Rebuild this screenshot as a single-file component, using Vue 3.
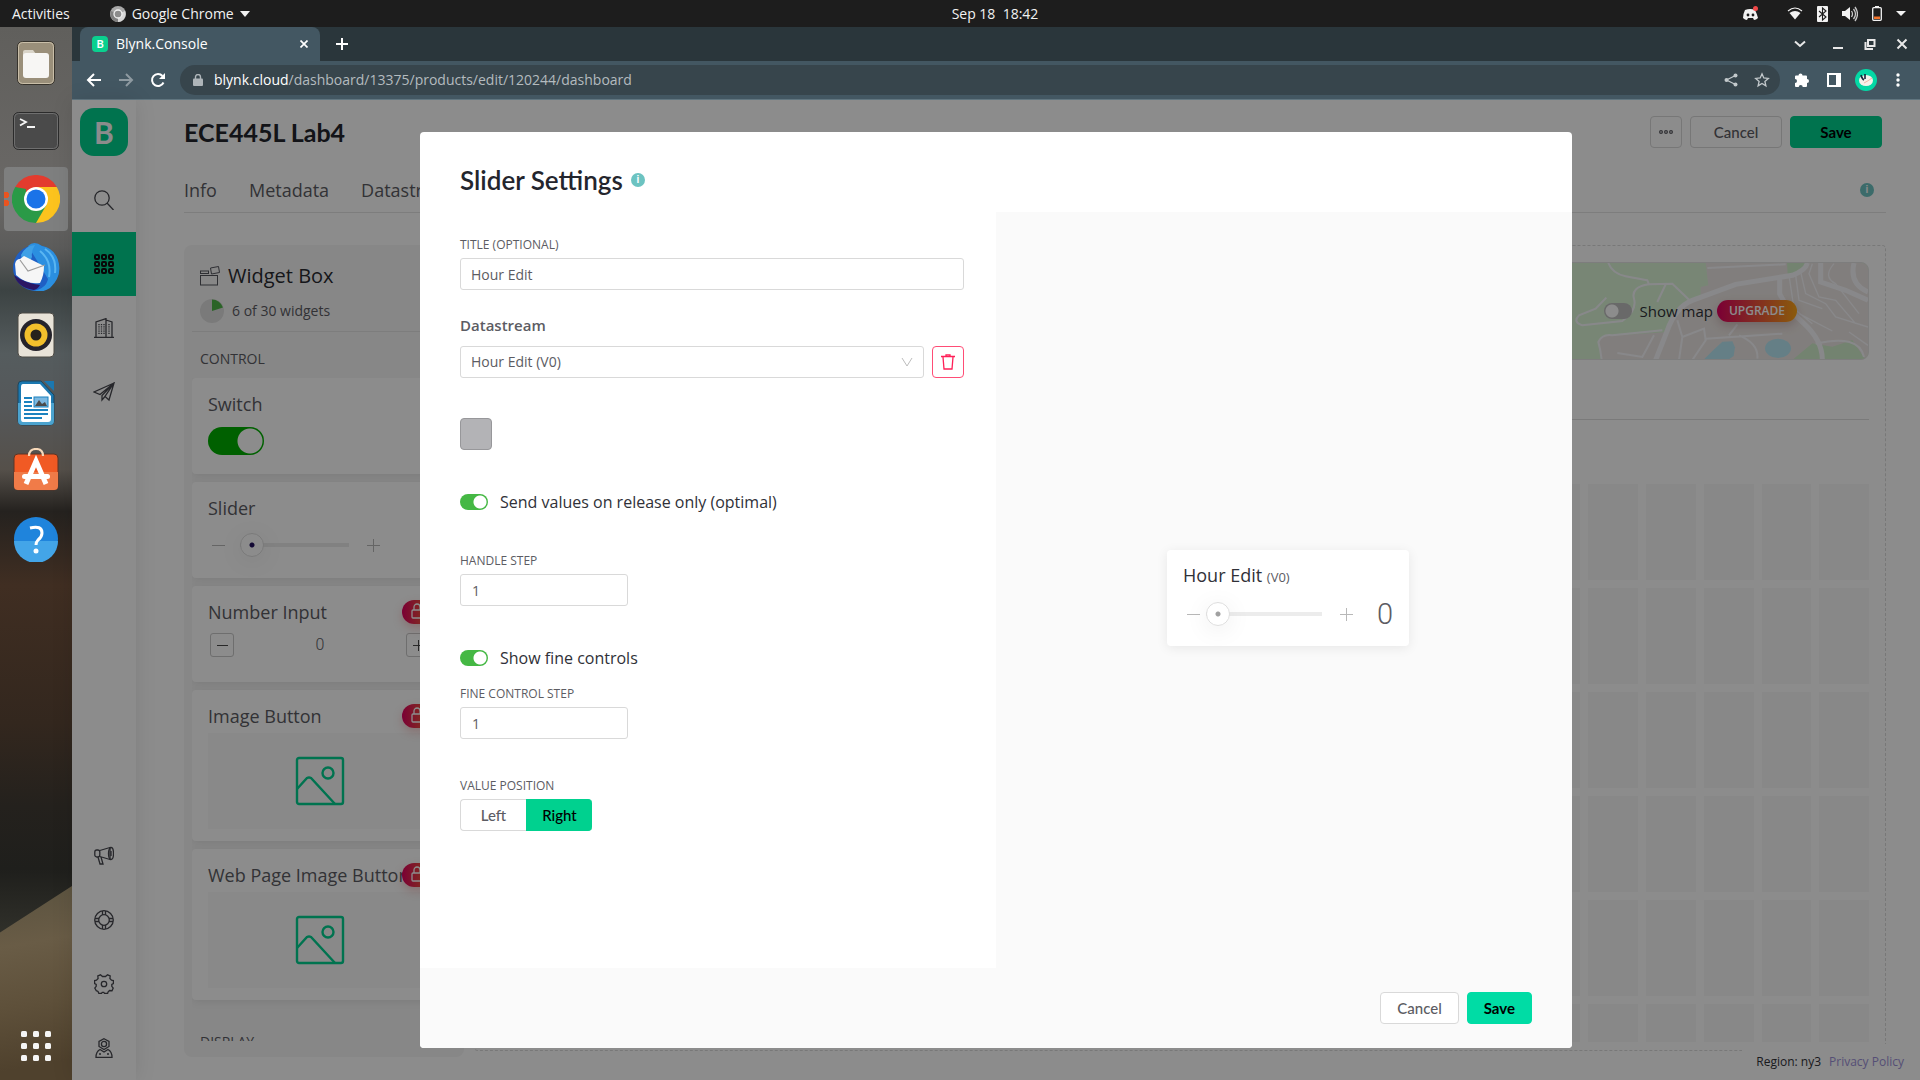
<script setup>
import { ref } from 'vue'

const title = ref('Hour Edit')
const stream = ref('Hour Edit (V0)')
const onRelease = ref(true)
const fineControls = ref(true)
const handleStep = ref('1')
const fineStep = ref('1')
const position = ref('Right')
const sliderValue = ref(0)
const demoSlider = ref(0)
const demoSwitch = ref(true)
const showMap = ref(false)
const columns = 24
const rows = 6
</script>

<template>
  <div class="desktop">
    <header class="topbar">
      <div class="topbar-left">
        <span>Activities</span>
        <span class="app-menu">
          <svg width="16" height="16" viewBox="0 0 16 16"><circle cx="8" cy="8" r="8" fill="#a9a9a9" /><path d="M8 8L15 5A8 8 0 0 1 8 16z" fill="#d8d8d8" /><path d="M8 8L1 5A8 8 0 0 0 8 16z" fill="#808080" /><circle cx="8" cy="8" r="4" fill="#8c8c8c" stroke="#f2f2f2" stroke-width="1.3" /></svg>
          Google Chrome
          <svg width="10" height="6" viewBox="0 0 10 6"><path d="M0 0h10L5 6z" fill="#f2f2f2" /></svg>
        </span>
      </div>
      <time class="clock">Sep 18&nbsp; 18:42</time>
      <div class="tray">
        <svg class="discord" width="17" height="15" viewBox="0 0 17 15"><path d="M3 4q5-2 10 0q2 4 3 8q-2 2-4 2l-1-2h-5l-1 2q-2 0-4-2q0-4 2-8z" fill="#f2f2f2" /><circle cx="6" cy="9" r="1.4" fill="#1d1d1d" /><circle cx="11" cy="9" r="1.4" fill="#1d1d1d" /><circle cx="13.5" cy="2.6" r="2.5" fill="#f04747" /></svg>
        <svg width="16" height="13" viewBox="0 0 16 13"><path d="M1 4q7-6 14 0" fill="none" stroke="#f2f2f2" stroke-width="1.2" /><path d="M2.500 6q5.500-4 11 0L8 12.500z" fill="#f2f2f2" /></svg>
        <svg width="11" height="16" viewBox="0 0 11 16"><rect width="11" height="16" rx="1" fill="#f2f2f2" /><path d="M2 5l7 6-3.500 3V2L9 5 2 11" fill="none" stroke="#1d1d1d" stroke-width="1.1" /></svg>
        <svg width="16" height="16" viewBox="0 0 16 16"><path d="M0 5h3l5-4v13l-5-4H0z" fill="#f2f2f2" /><path d="M9.500 5q2 3 0 6M11.500 3q4 5 0 10M13 1q5 7 0 14" fill="none" stroke="#c8c8c8" stroke-width="1.3" /></svg>
        <svg width="10" height="15" viewBox="0 0 10 15"><path d="M3 0h4v2H3z" fill="#f2f2f2" /><rect x=".7" y="1.700" width="8.600" height="12.600" rx="1" fill="none" stroke="#f2f2f2" stroke-width="1.300" /><path d="M2 10.500h6v2.500H2z" fill="#f37329" /></svg>
        <svg width="10" height="5" viewBox="0 0 10 5"><path d="M0 0h10L5 5z" fill="#f2f2f2" /></svg>
      </div>
    </header>

    <div class="workspace">
      <aside class="dock">
        <div class="dock-item">
          <svg width="46" height="46" viewBox="0 0 46 46"><rect x="4.500" y="1.500" width="37" height="43" rx="5" fill="#9a8f7a" stroke="#37332c" /><rect x="5.500" y="2.500" width="35" height="41" rx="4" fill="none" stroke="#c9bea8" /><path d="M10 12q0-2 2-2h8l3 4h-3L10 20z" fill="#d9d4c8" /><rect x="10" y="13" width="26" height="25" rx="3" fill="#f7f6f4" /></svg>
        </div>
        <div class="dock-item">
          <svg width="46" height="40" viewBox="0 0 46 40"><rect x=".5" y="1.500" width="45" height="37" rx="5" fill="#4a4a4a" stroke="#2b2b2b" /><rect x="1.500" y="2.500" width="43" height="35" rx="4" fill="none" stroke="#6f6f6f" /><path d="M7 8l6 3-6 3.500M14 16h8" fill="none" stroke="#f5f5f5" stroke-width="1.800" /></svg>
        </div>
        <div class="dock-item active">
          <svg width="48" height="48" viewBox="0 0 48 48"><path d="M24 24L3.200 12A24 24 0 0 1 44.800 12z" fill="#e33b2e" /><path d="M24 24L44.800 12A24 24 0 0 1 24 48z" fill="#fcc31e" /><path d="M24 24L24 48A24 24 0 0 1 3.200 12z" fill="#2a9a47" /><path d="M24 12h20.800L34 30z" fill="#fcc31e" /><path d="M13.600 30L3.200 12 14 14z" fill="#2a9a47" /><path d="M34.400 30L24 48l-4-10z" fill="#2a9a47" /><circle cx="24" cy="24" r="12" fill="#fff" /><circle cx="24" cy="24" r="9.500" fill="#1a73e8" /></svg>
        </div>
        <div class="dock-item">
          <svg width="48" height="48" viewBox="0 0 48 48"><circle cx="24" cy="25" r="23" fill="#1f5fc4" /><path d="M16 3q6-6 14 0q12 2 16 14q5 16-8 28q-10 6-18 3q14-2 16-12L24 16z" fill="#2b8fe0" /><path d="M33 6q12 8 10 24M28 8q12 10 9 26" fill="none" stroke="#5ab6f2" stroke-width="2" /><path d="M9 12q5-10 14-10-4 6-3 12-2 6-9 7z" fill="#3ea0e6" /><path d="M3 21q1-5 5-5l4-3 20 10q0 10-4 17Q15 42 4 32z" fill="#f6f6f6" /><path d="M8 17l8 11 17-6" fill="none" stroke="#9c9c9c" stroke-width="1.200" /><path d="M2 32q10 8 26 10-2 4-6 5Q6 45 2 32z" fill="#2b1664" /></svg>
        </div>
        <div class="dock-item">
          <svg width="38" height="46" viewBox="0 0 38 46"><rect x="1" y="1" width="36" height="44" rx="4" fill="#e8e3d8" stroke="#4d4a45" /><circle cx="19" cy="23" r="16" fill="#25232b" /><circle cx="19" cy="23" r="11.500" fill="#f2bf2c" /><circle cx="19" cy="23" r="5.500" fill="#26221c" /></svg>
        </div>
        <div class="dock-item">
          <svg width="38" height="46" viewBox="0 0 38 46"><path d="M5 1h19l13 14v26q0 4-4 4H5q-4 0-4-4V5q0-4 4-4z" fill="#1b78b0" stroke="#20455a" /><path d="M1 23h36v18q0 4-4 4H5q-4 0-4-4z" fill="#4ba3cf" /><path d="M27 1h10v10z" fill="#1b78b0" /><path d="M6 4h17l11 12v23q0 3-3 3H6q-2 0-2-3V7q0-3 2-3z" fill="#fff" /><path d="M7 18h8M7 22h8M7 26h8M7 30h24M7 34h24M7 38h18" stroke="#1b82bf" stroke-width="2" /><rect x="17" y="17" width="14" height="10" fill="#7cb8e0" stroke="#1b82bf" /><path d="M18 26l4-6 3 4 3-2 2 4z" fill="#4b4b4b" /></svg>
        </div>
        <div class="dock-item">
          <svg width="46" height="46" viewBox="0 0 46 46"><rect x="1" y="6" width="44" height="36" rx="4" fill="#f15a24" stroke="#5c3526" /><path d="M1 24h44v14q0 4-4 4H5q-4 0-4-4z" fill="#f07b48" /><path d="M16 8q0-7 7-7t7 7" fill="none" stroke="#f7d8b8" stroke-width="2.200" /><path d="M13 36l10-23 10 23" fill="none" stroke="#fff" stroke-width="5" /><rect x="9" y="26" width="28" height="5" rx="2.500" fill="#fff" /></svg>
        </div>
        <div class="dock-item">
          <svg width="46" height="46" viewBox="0 0 46 46"><circle cx="23" cy="23" r="22" fill="#1f84dc" /><path d="M1 25a22 22 0 0 0 44 0z" fill="#43a5e8" /><path d="M17 12q12-3 12 5 0 4-4 7-2 2-2 5" fill="none" stroke="#fff" stroke-width="3" /><circle cx="23" cy="35" r="2.500" fill="#fff" /></svg>
        </div>
        <button class="show-apps" aria-label="Show applications">
          <svg width="30" height="30" viewBox="0 0 30 30" fill="#f5f5f5"><g v-for="r in 3" :key="r"><rect v-for="c in 3" :key="c" :x="(c - 1) * 12" :y="(r - 1) * 12" width="6" height="6" rx="1.500" /></g></svg>
        </button>
      </aside>

      <div class="browser">
        <div class="tabstrip">
          <div class="tab">
            <span class="favicon">B</span>
            <span class="tab-title">Blynk.Console</span>
            <svg width="8" height="8" viewBox="0 0 8 8"><path d="M.5.5l7 7M7.500.5l-7 7" stroke="#fff" stroke-width="1.700" /></svg>
          </div>
          <svg class="new-tab" width="12" height="12" viewBox="0 0 12 12"><path d="M6 0v12M0 6h12" stroke="#fff" stroke-width="2" /></svg>
          <div class="window-controls">
            <svg class="tab-search" width="12" height="12" viewBox="0 0 12 12"><path d="M1 3.500l5 4.500 5-4.500" fill="none" stroke="#e8e8e8" stroke-width="2" /></svg>
            <svg width="12" height="12" viewBox="0 0 12 12"><path d="M1 10h10" stroke="#e8e8e8" stroke-width="2" /></svg>
            <svg width="12" height="12" viewBox="0 0 12 12"><path d="M4 2h6.500v6H4zM1.500 4v7H9" fill="none" stroke="#e8e8e8" stroke-width="2" /></svg>
            <svg width="12" height="12" viewBox="0 0 12 12"><path d="M1.500 1.500l9 9M10.500 1.500l-9 9" stroke="#e8e8e8" stroke-width="2" /></svg>
          </div>
        </div>

        <div class="toolbar">
          <div class="nav-buttons">
            <svg width="16" height="16" viewBox="0 0 16 16"><path d="M15 8H2M8 2L2 8l6 6" fill="none" stroke="#fff" stroke-width="2" /></svg>
            <svg width="16" height="16" viewBox="0 0 16 16"><path d="M1 8h13M8 2l6 6-6 6" fill="none" stroke="#8e9aa1" stroke-width="2" /></svg>
            <svg width="16" height="16" viewBox="0 0 16 16"><path d="M13.500 10.500A6 6 0 1 1 12.500 4" fill="none" stroke="#fff" stroke-width="2" /><path d="M15 1v6H9z" fill="#fff" /></svg>
          </div>
          <div class="omnibox">
            <svg width="10" height="12" viewBox="0 0 10 12"><rect y="4.500" width="10" height="7.500" rx="1" fill="#aeb5b9" /><path d="M2.500 5V3a2.500 2.500 0 0 1 5 0v2" fill="none" stroke="#aeb5b9" stroke-width="1.400" /></svg>
            <span class="url"><b>blynk.cloud</b>/dashboard/13375/products/edit/120244/dashboard</span>
            <svg width="14" height="14" viewBox="0 0 14 14"><path d="M11.500 2.500L2.500 7l9 4.500" fill="none" stroke="#c3c9cc" stroke-width="1.300" /><g fill="#c3c9cc"><circle cx="11.500" cy="2.500" r="2" /><circle cx="2.500" cy="7" r="2" /><circle cx="11.500" cy="11.500" r="2" /></g></svg>
            <svg width="16" height="16" viewBox="0 0 16 16"><path d="M8 1.800l1.800 4.200 4.500.4-3.400 3 1 4.400L8 11.500l-3.900 2.300 1-4.400-3.400-3 4.500-.4z" fill="none" stroke="#c3c9cc" stroke-width="1.300" /></svg>
          </div>
          <div class="extensions">
            <svg width="16" height="16" viewBox="0 0 16 16"><path d="M4.500 3.500a2 2 0 0 1 4 0H12q1 0 1 1V7a2 2 0 0 1 0 4v3q0 1-1 1H8.700a2 2 0 0 0-4 0H2q-1 0-1-1v-3a2 2 0 0 0 0-4V4.500q0-1 1-1z" fill="#fff" /></svg>
            <svg width="14" height="14" viewBox="0 0 14 14"><rect x="1" y="1" width="12" height="12" fill="none" stroke="#fff" stroke-width="2" /><path d="M9 1h4v12H9z" fill="#fff" /></svg>
            <svg width="22" height="22" viewBox="0 0 22 22"><circle cx="11" cy="11" r="11" fill="#04d8a5" /><ellipse cx="11" cy="11.500" rx="7" ry="5.500" fill="#f5f1ea" /><path d="M6 6q1 4 3 5M10 5v5" stroke="#16243a" stroke-width="1.600" /><path d="M9 14q4-2 8-5" stroke="#f0b8a8" fill="none" /></svg>
            <svg width="4" height="14" viewBox="0 0 4 14" fill="#fff"><circle cx="2" cy="2" r="1.700" /><circle cx="2" cy="7" r="1.700" /><circle cx="2" cy="12" r="1.700" /></svg>
          </div>
        </div>

        <div class="page">
          <nav class="sidebar">
            <a href="#" class="logo">B</a>
            <a href="#" class="side-link" aria-label="Search"><svg width="20" height="20" viewBox="0 0 20 20"><circle cx="8" cy="8" r="7.200" /><path d="M13 13l6.500 7" /></svg></a>
            <a href="#" class="side-link current" aria-label="Templates"><svg width="20" height="20" viewBox="0 0 20 20"><g v-for="r in 3" :key="r"><rect v-for="c in 3" :key="c" :x="(c - 1) * 7 + 1" :y="(r - 1) * 7 + 1" width="4" height="4" rx="1" /></g></svg></a>
            <a href="#" class="side-link" aria-label="Organization"><svg width="20" height="20" viewBox="0 0 20 20"><path d="M0 19.400h20M2 19V4l10-3.400V19M12 2l6 2v15" /><path d="M5 6v10M7.500 6v10M10 6v10M15 6v10" stroke-dasharray="1.200 1" /></svg></a>
            <a href="#" class="side-link" aria-label="Messages"><svg width="22" height="20" viewBox="0 0 22 20"><path d="M21 1L1 10l6 2.500L21 1l-5 17-4-3.500L21 1 9 13.500V18l3-3.500" /></svg></a>
            <span class="spacer"></span>
            <a href="#" class="side-link" aria-label="News"><svg width="20" height="20" viewBox="0 0 20 20"><rect x=".8" y="4" width="5" height="7" rx="2" /><path d="M5.800 4.500L16 1.500v12L5.800 10.500M4 11l2 7h3l-2-7" /><ellipse cx="17" cy="7.500" rx="2.500" ry="6" /><path d="M17 5v5" /></svg></a>
            <a href="#" class="side-link" aria-label="Help"><svg width="20" height="20" viewBox="0 0 20 20"><circle cx="10" cy="10" r="9.300" /><circle cx="10" cy="10" r="5.300" /><path d="M8.500 1v4M11.500 1v4M8.500 15v4M11.500 15v4M1 8.500h4M1 11.500h4M15 8.500h4M15 11.500h4" /></svg></a>
            <a href="#" class="side-link" aria-label="Settings"><svg width="20" height="20" viewBox="0 0 20 20"><path d="M6.500.8l2 1.700h3l2-1.700 2.700 1.200-.3 2.500 1.600 1.600 1.900.4v3l-1.600.8v2l1.400 1.700-1.200 2.700-2.500-.2-1.500 1.500-.4 1.500h-3l-.8-1.200h-1.600l-.8 1.200h-2.500L4 17.500l-1.700-.8-1.500-2.700 1.400-1.700v-2L.6 9.500v-3l1.900-.4 1.600-1.600L3.800 2z" /><circle cx="10" cy="10" r="2.700" /></svg></a>
            <a href="#" class="side-link" aria-label="Profile"><svg width="20" height="20" viewBox="0 0 20 20"><path d="M10 .7l5 2.800v5L10 11.500 5 8.500v-5zM6 11.500q-4 2-4 7.800h16q0-5.800-4-7.800l-4 2.500zM5 16h2M13 16h2" /><circle cx="10" cy="6" r="2.600" /></svg></a>
          </nav>

          <main class="content">
            <div class="page-head">
              <h1>ECE445L Lab4</h1>
              <button class="btn more" aria-label="More"><svg width="14" height="4" viewBox="0 0 14 4" fill="none" stroke="#5c5c63" stroke-width="1.200"><circle cx="2" cy="2" r="1.400" /><circle cx="7" cy="2" r="1.400" /><circle cx="12" cy="2" r="1.400" /></svg></button>
              <button class="btn wide">Cancel</button>
              <button class="btn wide primary">Save</button>
            </div>
            <div class="tabs">
              <a href="#">Info</a>
              <a href="#">Metadata</a>
              <a href="#">Datastreams</a>
              <span class="info-dot">i</span>
            </div>

            <div class="builder">
              <section class="widget-box">
                <h2>
                  <svg width="20" height="20" viewBox="0 0 20 20" fill="none" stroke="#55565e"><rect x=".5" y="9.500" width="17" height="9.500" /><rect x=".5" y="5" width="8" height="2.500" /><path d="M10.500 2l8-1.500 1 6-8 1.500z" /></svg>
                  Widget Box
                </h2>
                <p class="usage">
                  <svg width="24" height="24" viewBox="0 0 24 24"><circle cx="12" cy="12" r="12" fill="#dedede" /><path d="M12 12V.5A11.500 11.500 0 0 1 23 8.500z" fill="#4fb748" /></svg>
                  6 of 30 widgets
                </p>
                <h3>CONTROL</h3>
                <div class="widget-list">
                  <article class="widget">
                    <h4>Switch</h4>
                    <input v-model="demoSwitch" class="big-switch" type="checkbox" aria-label="Switch" />
                  </article>
                  <article class="widget">
                    <h4>Slider</h4>
                    <div class="slider-row">
                      <span class="minus"></span>
                      <input v-model="demoSlider" class="range dark" type="range" min="0" max="10" aria-label="Slider" />
                      <span class="plus"></span>
                    </div>
                  </article>
                  <article class="widget">
                    <h4>Number Input</h4>
                    <span class="lock"><svg width="12" height="16" viewBox="0 0 12 16"><rect x="1" y="7" width="10" height="8" rx="1" /><path d="M3 7V4a3 3 0 0 1 6 0v3" /></svg></span>
                    <div class="stepper">
                      <button aria-label="Decrease"><span class="minus"></span></button>
                      <span class="num">0</span>
                      <button aria-label="Increase"><span class="plus"></span></button>
                    </div>
                  </article>
                  <article v-for="name in ['Image Button', 'Web Page Image Button']" :key="name" class="widget tall">
                    <h4>{{ name }}</h4>
                    <span class="lock"><svg width="12" height="16" viewBox="0 0 12 16"><rect x="1" y="7" width="10" height="8" rx="1" /><path d="M3 7V4a3 3 0 0 1 6 0v3" /></svg></span>
                    <div class="picture">
                      <svg width="50" height="50" viewBox="0 0 50 50" fill="none" stroke="#00d191" stroke-width="2.400"><rect x="2" y="2" width="46" height="46" rx="2" /><circle cx="33" cy="17" r="5.500" /><path d="M2 33l10-11q2-1 4 0l24 26" /></svg>
                    </div>
                  </article>
                  <h3 class="next">DISPLAY</h3>
                </div>
              </section>

              <section class="canvas">
                <div class="map">
                  <svg width="309" height="97" viewBox="0 128 927 291">
                    <rect y="128" width="927" height="291" fill="#ece6e3" />
                    <path d="M0 128H440L448 195 425 200V225L360 262 330 335 180 345Q120 340 120 365L128 419H0z" fill="#daf5d6" />
                    <path d="M684 128h60l-20 30-38 4zM700 419l60-50 60 10 60-20 40 60z" fill="#d2efcc" />
                    <path d="M434 418l30-30 26-24 30-1 8 18-4 26-16 11z" fill="#b8e7f5" />
                    <ellipse cx="657" cy="384" rx="39" ry="29" fill="#b8e7f5" />
                    <g fill="none" stroke="#f8f8fc">
                      <path d="M290 419L325 330Q350 260 400 240L530 192 700 165Q740 150 745 128M785 128V185L860 210 927 240M885 128Q870 190 927 215M662 175V220Q680 260 735 310T790 419" stroke-width="15" />
                      <path d="M148 128Q160 160 200 168T265 180L270 192Q215 200 225 235T190 302L70 315Q40 305 60 285L110 265 142 232M270 192L340 190 390 238M320 192L295 245M128 419Q125 390 118 365 130 340 160 345L310 330M175 398L250 410 285 345M355 300L370 350 360 419M370 350L435 325 440 360 400 419M440 355L670 340M510 345L535 312M540 345Q600 370 595 415M445 143L680 132M770 370Q900 340 915 410" stroke-width="6" />
                      <path d="M690 165L705 265 760 310M710 165L720 240 790 265M725 155L740 220 800 250 830 290 927 320M760 130L750 160 780 230 830 240 890 310M720 280L820 332M825 130Q790 170 830 190L900 280M870 335L927 375" stroke-width="4" />
                    </g>
                  </svg>
                  <label class="map-toggle">
                    <input v-model="showMap" class="switch" type="checkbox" />
                    Show map
                    <span class="upgrade">UPGRADE</span>
                  </label>
                </div>
                <hr />
                <div class="cells">
                  <i v-for="n in columns * rows" :key="n"></i>
                </div>
              </section>
            </div>

            <footer class="page-foot">
              <span>Region: ny3</span>
              <a href="#">Privacy Policy</a>
            </footer>
          </main>

          <div class="overlay">
            <form class="modal" role="dialog" aria-label="Slider Settings" @submit.prevent>
              <header class="modal-head">
                <h2>Slider Settings</h2>
                <span class="info-dot">i</span>
              </header>
              <div class="modal-body">
                <div class="fields">
                  <label class="caption" for="title">TITLE (OPTIONAL)</label>
                  <input id="title" v-model="title" class="text" type="text" />

                  <label class="strong" for="stream">Datastream</label>
                  <div class="stream-row">
                    <div class="select-wrap">
                      <select id="stream" v-model="stream" class="text"><option>Hour Edit (V0)</option></select>
                      <svg width="12" height="10" viewBox="0 0 12 10"><path d="M1 1l5 8 5-8" fill="none" stroke="#bdbdbd" /></svg>
                    </div>
                    <button class="delete" type="button" aria-label="Delete">
                      <svg width="14" height="16" viewBox="0 0 14 16" fill="none" stroke="#ff1f57" stroke-width="1.300"><path d="M0 2.500h14M5 2V.8h4V2M2 3l1 12h8l1-12" /></svg>
                    </button>
                  </div>

                  <button class="swatch" type="button" aria-label="Slider color"></button>

                  <label class="toggle"><input v-model="onRelease" class="switch" type="checkbox" />Send values on release only (optimal)</label>

                  <label class="caption" for="handle">HANDLE STEP</label>
                  <input id="handle" v-model="handleStep" class="text short" type="text" />

                  <label class="toggle"><input v-model="fineControls" class="switch" type="checkbox" />Show fine controls</label>

                  <label class="caption fine" for="fine">FINE CONTROL STEP</label>
                  <input id="fine" v-model="fineStep" class="text short" type="text" />

                  <span id="pos" class="caption position">VALUE POSITION</span>
                  <div class="segmented" role="radiogroup" aria-labelledby="pos">
                    <label v-for="side in ['Left', 'Right']" :key="side" :class="{ on: position === side }">
                      <input v-model="position" type="radio" name="position" :value="side" />{{ side }}
                    </label>
                  </div>
                </div>
                <div class="preview">
                  <div class="preview-card">
                    <p class="preview-title">Hour Edit <small>(V0)</small></p>
                    <div class="slider-row">
                      <span class="minus"></span>
                      <input v-model="sliderValue" class="range" type="range" min="0" max="10" aria-label="Hour Edit" />
                      <span class="plus"></span>
                      <output>0</output>
                    </div>
                  </div>
                </div>
              </div>
              <footer class="modal-foot">
                <button class="btn" type="button">Cancel</button>
                <button class="btn primary bright" type="submit">Save</button>
              </footer>
            </form>
          </div>
        </div>
      </div>
    </div>
  </div>
</template>

<style>
body {
  margin: 0;
  background: #1d1d1d;
}
</style>

<style scoped>
* {
  box-sizing: border-box;
}
.desktop {
  display: flex;
  flex-direction: column;
  height: 100vh;
  overflow: hidden;
  font: 14px/20px "Open Sans", "Noto Sans", sans-serif;
  color: #5c5c63;
}
svg {
  display: block;
  flex: none;
}
h1, h2, h3, h4, p {
  margin: 0;
  font-weight: 400;
}
a {
  color: inherit;
  text-decoration: none;
}
button, input, select {
  font: inherit;
  color: inherit;
  margin: 0;
  padding: 0;
}

/* System bar */
.topbar {
  flex: none;
  height: 27px;
  display: grid;
  grid-template-columns: 1fr auto 1fr;
  align-items: center;
  padding: 0 14px 0 12px;
  background: #1d1d1d;
  color: #f2f2f2;
}
.topbar-left, .app-menu, .tray {
  display: flex;
  align-items: center;
}
.topbar-left {
  gap: 40px;
}
.app-menu {
  gap: 6px;
}
.clock {
  padding-left: 72px;
}
.tray {
  justify-content: flex-end;
  gap: 14px;
}
.discord {
  margin-right: 14px;
}

.workspace {
  flex: 1;
  min-height: 0;
  display: flex;
}

/* Dock */
.dock {
  flex: none;
  width: 72px;
  position: relative;
  display: flex;
  flex-direction: column;
  align-items: center;
  padding: 4px 0 19px;
  gap: 4px;
  background: linear-gradient(#605f5c 0, #6a6866 16%, #5c5c5b 21%, #3c4343 25%, #555c5e 31%, #55585a 36%, #55504a 42%, #25221f 46%, #402e22 53%, #33271e 66%, #24211d 74%, #1f1f1c 80%, #30302a 86%);
}
.dock::after {
  content: "";
  position: absolute;
  inset: auto 0 0 0;
  height: 194px;
  background: linear-gradient(170deg, #5a523f, #695c46 30%, #5e503a 60%, #4f412d 90%);
  clip-path: polygon(0 24%, 100% 0, 100% 100%, 0 100%);
}
.dock-item {
  width: 64px;
  height: 64px;
  display: flex;
  align-items: center;
  justify-content: center;
}
.dock-item.active {
  position: relative;
  border-radius: 4px;
  background: #7e7f7f;
}
.dock-item.active::before {
  content: "";
  position: absolute;
  left: 0;
  top: 25px;
  width: 5px;
  height: 14px;
  background: radial-gradient(circle at 2px 3px, #e95420 3px, transparent 3px), radial-gradient(circle at 2px 11px, #e95420 3px, transparent 3px);
}
.show-apps {
  position: relative;
  z-index: 1;
  margin-top: auto;
  border: 0;
  background: none;
}

/* Browser chrome */
.browser {
  flex: 1;
  min-width: 0;
  display: flex;
  flex-direction: column;
}
.tabstrip {
  flex: none;
  height: 34px;
  display: flex;
  align-items: center;
  padding: 0 12px 0 8px;
  background: #2a363b;
}
.tab {
  width: 240px;
  height: 34px;
  display: flex;
  align-items: center;
  gap: 8px;
  padding: 0 12px;
  border-radius: 8px 8px 0 0;
  background: #435762;
  color: #fff;
}
.tab-title {
  flex: 1;
}
.favicon {
  width: 16px;
  border-radius: 4px;
  background: #0ad08f;
  font: bold 11px/16px "Lato", sans-serif;
  text-align: center;
}
.new-tab {
  margin-left: 16px;
}
.window-controls {
  margin-left: auto;
  display: flex;
  gap: 20px;
}
.tab-search {
  margin-right: 6px;
}
.toolbar {
  flex: none;
  height: 39px;
  display: flex;
  align-items: center;
  gap: 14px;
  padding: 0 6px 0 14px;
  background: #435762;
  border-bottom: 1px solid #60757f;
}
.nav-buttons {
  display: flex;
  gap: 16px;
}
.omnibox {
  flex: 1;
  height: 30px;
  display: flex;
  align-items: center;
  gap: 16px;
  padding: 0 10px 0 13px;
  border-radius: 15px;
  background: #37454c;
}
.url {
  flex: 1;
  margin-left: -5px;
  color: #b4bbbf;
}
.url b {
  font-weight: 400;
  color: #fff;
}
.extensions {
  display: grid;
  grid-template-columns: repeat(4, 32px);
  align-items: center;
  justify-items: center;
  margin-left: -8px;
}

/* Application page */
.page {
  position: relative;
  flex: 1;
  min-height: 0;
  display: flex;
  background: #fff;
}
.sidebar {
  flex: none;
  width: 64px;
  display: flex;
  flex-direction: column;
  align-items: center;
  box-shadow: 0 0 20px rgba(0, 0, 0, .1);
}
.logo {
  width: 48px;
  margin: 8px 0 12px;
  border-radius: 14px;
  background: #00d18f;
  color: #fff;
  font: bold 30px/48px "Lato", sans-serif;
  text-align: center;
}
.side-link {
  width: 64px;
  height: 64px;
  display: flex;
  align-items: center;
  justify-content: center;
}
.side-link svg {
  fill: none;
  stroke: #47484f;
  stroke-width: 1.3px;
}
.side-link.current {
  background: #00d18f;
}
.side-link.current svg {
  stroke: #101010;
  stroke-width: 2px;
}
.spacer {
  flex: 1;
}
.content {
  flex: 1;
  min-width: 0;
  display: flex;
  flex-direction: column;
  padding: 16px 34px 8px 48px;
}
.page-head {
  display: flex;
  gap: 8px;
  padding-right: 4px;
}
h1 {
  flex: 1;
  font: 700 25px/32px "Lato", sans-serif;
  color: #24252d;
}
.btn {
  height: 32px;
  padding: 0 16px;
  border: 1px solid #d9d9d9;
  border-radius: 4px;
  background: #fff;
  font: 500 15px/20px "Lato", sans-serif;
  color: #5c5c63;
}
.btn.more {
  width: 32px;
  display: flex;
  align-items: center;
  justify-content: center;
  padding: 0;
}
.btn.wide {
  width: 92px;
}
.btn.primary {
  border-color: #00d18f;
  background: #00d18f;
  color: #000;
  font-weight: 700;
}
.btn.bright {
  border-color: #00dca5;
  background: #00dca5;
}
.tabs {
  display: flex;
  align-items: center;
  gap: 32px;
  height: 65px;
  padding: 20px 12px 0 0;
  border-bottom: 1px solid #e4e4e4;
  font-size: 18px;
}
.info-dot {
  width: 14px;
  height: 14px;
  border-radius: 7px;
  background: #6cc3c1;
  color: #fff;
  font: bold 10px/14px "Liberation Sans", sans-serif;
  text-align: center;
}
.tabs .info-dot {
  margin-left: auto;
}
.builder {
  flex: 1;
  min-height: 0;
  display: flex;
  gap: 10px;
  padding-top: 32px;
}
.widget-box {
  flex: none;
  width: 280px;
  height: 812px;
  padding: 16px 16px 16px 8px;
  display: flex;
  flex-direction: column;
  border-radius: 8px;
  background: #f6f6f6;
}
.widget-box h2 {
  display: flex;
  align-items: center;
  gap: 8px;
  height: 30px;
  padding-left: 8px;
  font-size: 20px;
  color: #292b31;
}
.usage {
  display: flex;
  align-items: center;
  gap: 8px;
  height: 41px;
  padding: 0 0 0 8px;
  border-bottom: 1px solid #e4e4e4;
}
.widget-box h3 {
  padding: 17px 0 9px 8px;
  font-size: 14px;
}
.widget-list {
  flex: 1;
  min-height: 0;
  overflow: hidden;
  display: flex;
  flex-direction: column;
  gap: 8px;
}
.widget {
  flex: none;
  position: relative;
  height: 96px;
  padding: 16px;
  border-radius: 4px;
  background: #fff;
  box-shadow: 0 2px 8px rgba(0, 0, 0, .08);
}
.widget.tall {
  height: 151px;
}
.widget h4 {
  font-size: 18px;
  line-height: 20px;
  white-space: nowrap;
}
.widget-box .next {
  padding-top: 24px;
}
.big-switch, .switch {
  appearance: none;
  display: block;
  flex: none;
  width: 28px;
  height: 16px;
  border-radius: 8px;
  background: radial-gradient(circle at 8px 8px, #fff 6px, #bfbfbf 7px);
}
.switch:checked {
  background: radial-gradient(circle at 20px 8px, #fff 6px, #45b844 7px);
}
.big-switch {
  width: 56px;
  height: 28px;
  margin-top: 13px;
  border-radius: 14px;
  background: radial-gradient(circle at 42px 14px, #fff 12px, #00b000 13px);
}
.slider-row {
  display: flex;
  align-items: center;
  height: 24px;
  padding: 0 0 0 4px;
}
.widget .slider-row {
  margin-top: 15px;
}
.minus, .plus {
  flex: none;
  width: 13px;
  height: 13px;
  background: linear-gradient(#b8b8b8, #b8b8b8) center / 13px 1px no-repeat;
}
.plus {
  background: linear-gradient(#b8b8b8, #b8b8b8) center / 13px 1px no-repeat, linear-gradient(#b8b8b8, #b8b8b8) center / 1px 13px no-repeat;
}
.range {
  appearance: none;
  flex: none;
  width: 116px;
  height: 24px;
  margin: 0 18px 0 6px;
  background: linear-gradient(#ececec, #ececec) center / 116px 4px no-repeat;
}
.range.dark {
  width: 109px;
  margin-left: 15px;
}
.range::-webkit-slider-thumb {
  appearance: none;
  width: 24px;
  height: 24px;
  border: 1px solid #dedede;
  border-radius: 12px;
  background: radial-gradient(circle, #a0a0a0 2px, #fff 3px);
  box-shadow: 0 4px 24px rgba(0, 0, 0, .08);
}
.range.dark::-webkit-slider-thumb {
  background: radial-gradient(circle, #24125f 2px, #fff 3px);
}
.lock {
  position: absolute;
  left: 210px;
  top: 14px;
  width: 44px;
  height: 24px;
  padding: 3px 9px;
  border-radius: 12px;
  background: linear-gradient(90deg, #e00060, #fca516);
  box-shadow: 0 4px 10px rgba(220, 60, 60, .25);
}
.lock svg {
  fill: none;
  stroke: #fff;
  stroke-width: 1.3px;
}
.stepper {
  display: flex;
  align-items: center;
  justify-content: space-between;
  margin: 11px 2px 0;
}
.stepper button {
  width: 24px;
  height: 24px;
  display: flex;
  align-items: center;
  justify-content: center;
  border: 1px solid #c8c8c8;
  border-radius: 3px;
  background: none;
}
.stepper .minus, .stepper .plus {
  width: 11px;
  height: 11px;
  filter: brightness(.4);
}
.num {
  font: 300 16px/20px "Roboto", sans-serif;
}
.picture {
  height: 96px;
  margin-top: 7px;
  display: flex;
  align-items: center;
  justify-content: center;
  background: #f9f9f9;
}

.canvas {
  flex: 1;
  min-width: 0;
  height: 806px;
  padding: 16px 16px 8px;
  border: 1px dashed #dadada;
  border-radius: 4px;
  overflow: hidden;
}
.map {
  position: relative;
  height: 98px;
  display: flex;
  justify-content: flex-end;
  overflow: hidden;
  border: 1px solid #e4e4e4;
  border-radius: 8px;
  background: #daf5d6;
}
.map-toggle {
  position: absolute;
  right: 71px;
  top: 36px;
  display: flex;
  align-items: center;
  height: 24px;
  font-size: 15px;
  color: #303138;
}
.map-toggle .switch {
  margin-right: 8px;
}
.upgrade {
  margin-left: 4px;
  padding: 0 12px;
  border-radius: 11px;
  background: linear-gradient(90deg, #e00060, #fca516);
  box-shadow: 0 4px 10px rgba(120, 60, 60, .25);
  color: #fff;
  font: 600 12px/22px "Open Sans", sans-serif;
}
hr {
  height: 1px;
  margin: 59px 0 64px;
  border: 0;
  background: #dedede;
}
.cells {
  height: 558px;
  overflow: hidden;
  display: grid;
  grid-template-columns: repeat(24, 1fr);
  grid-auto-rows: 96px;
  gap: 8px;
}
.cells i {
  background: #f7f7f7;
}
.page-foot {
  display: flex;
  align-self: flex-end;
  gap: 8px;
  margin: -8px -18px 0 0;
  padding: 8px 0 0 14px;
  background: #fff;
  font-size: 12px;
  color: #303138;
}
.page-foot a {
  color: #9c90d8;
}

/* Modal */
.overlay {
  position: absolute;
  inset: 0;
  display: flex;
  justify-content: center;
  padding: 32px;
  background: rgba(0, 0, 0, .45);
}
.modal {
  width: 1152px;
  display: flex;
  flex-direction: column;
  border-radius: 4px;
  overflow: hidden;
  background: #fff;
}
.modal-head {
  flex: none;
  height: 80px;
  display: flex;
  align-items: center;
  gap: 8px;
  padding: 16px 40px 0;
}
.modal-head h2 {
  font: 600 26px/32px "Lato", sans-serif;
  color: #24252d;
}
.modal-body {
  flex: 1;
  min-height: 0;
  display: grid;
  grid-template-columns: 1fr 1fr;
}
.fields {
  padding: 23px 32px 0 40px;
}
.caption {
  display: block;
  margin-bottom: 3px;
  font-size: 12px;
}
.text {
  display: block;
  width: 100%;
  height: 32px;
  padding: 0 10px;
  border: 1px solid #d9d9d9;
  border-radius: 3px;
  background: #fff;
}
.text.short {
  width: 168px;
  padding: 0 11px;
}
.strong {
  display: block;
  margin: 25px 0 11px;
  font-size: 15px;
  font-weight: 600;
}
.stream-row {
  display: flex;
  gap: 8px;
}
.select-wrap {
  position: relative;
  flex: 1;
}
.select-wrap select {
  appearance: none;
}
.select-wrap svg {
  position: absolute;
  right: 11px;
  top: 11px;
}
.delete {
  width: 32px;
  height: 32px;
  display: flex;
  align-items: center;
  justify-content: center;
  border: 1px solid #ff4d76;
  border-radius: 4px;
  background: #fff;
}
.swatch {
  display: block;
  width: 32px;
  height: 32px;
  margin-top: 40px;
  border: 1px solid #97979a;
  border-radius: 4px;
  background: #b3b3b6;
}
.toggle {
  display: flex;
  align-items: center;
  gap: 12px;
  height: 24px;
  margin: 40px 0 37px;
  font-size: 16px;
  color: #303138;
}
.toggle + .fine {
  margin-top: -23px;
}
.position {
  margin-top: 37px;
}
.segmented {
  display: flex;
}
.segmented label {
  width: 66px;
  height: 32px;
  border: 1px solid #d9d9d9;
  border-right: 0;
  border-radius: 4px 0 0 4px;
  font: 500 15px/30px "Lato", sans-serif;
  text-align: center;
}
.segmented label.on {
  border-color: #00d18f;
  border-radius: 0 4px 4px 0;
  background: #00d18f;
  color: #000;
}
.segmented input {
  position: absolute;
  opacity: 0;
}
.preview {
  display: flex;
  align-items: center;
  justify-content: center;
  padding: 16px 0 0 8px;
  background: #fafafa;
}
.preview-card {
  width: 242px;
  height: 96px;
  padding: 15px 16px;
  border-radius: 4px;
  background: #fff;
  box-shadow: 0 2px 12px rgba(0, 0, 0, .08);
}
.preview-title {
  font-size: 18px;
  color: #303138;
}
.preview-title small {
  font-size: 13px;
  color: #5c5c63;
}
.preview-card .slider-row {
  margin-top: 15px;
}
output {
  margin-left: auto;
  font: 300 29px/24px "Roboto", sans-serif;
}
.modal-foot {
  flex: none;
  height: 80px;
  display: flex;
  align-items: center;
  justify-content: flex-end;
  gap: 8px;
  padding: 0 40px;
  background: #fafafa;
}
</style>
